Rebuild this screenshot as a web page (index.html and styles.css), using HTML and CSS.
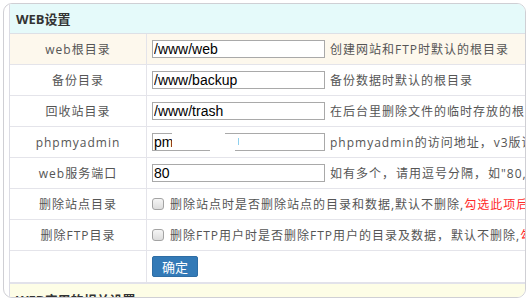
FILE: index.html
```html
<!DOCTYPE html>
<html lang="zh-CN">
<head>
<meta charset="utf-8">
<title>WEB设置</title>
<link rel="stylesheet" href="styles.css">
</head>
<body>
<div class="panel">
  <div class="inner">
    <div class="head">WEB设置</div>
    <div class="row row-hl">
      <div class="label">web根目录</div>
      <div class="value"><input class="txt" type="text" value="/www/web"><span class="desc">创建网站和FTP时默认的根目录</span></div>
    </div>
    <div class="row">
      <div class="label">备份目录</div>
      <div class="value"><input class="txt" type="text" value="/www/backup"><span class="desc">备份数据时默认的根目录</span></div>
    </div>
    <div class="row">
      <div class="label">回收站目录</div>
      <div class="value"><input class="txt" type="text" value="/www/trash"><span class="desc">在后台里删除文件的临时存放的根目录</span></div>
    </div>
    <div class="row">
      <div class="label">phpmyadmin</div>
      <div class="value"><span class="field"><input class="txt" type="text" value="pma"><span class="glitch glitch-a"></span><span class="glitch glitch-b"></span><span class="tick"></span></span><span class="desc">phpmyadmin的访问地址<span class="fw">，</span>v3版请勿随意修改</span></div>
    </div>
    <div class="row">
      <div class="label">web服务端口</div>
      <div class="value"><input class="txt" type="text" value="80"><span class="desc">如有多个<span class="fw">，</span>请用逗号分隔<span class="fw">，</span>如"80,8080"</span></div>
    </div>
    <div class="row">
      <div class="label">删除站点目录</div>
      <div class="value"><input class="chk" type="checkbox"><span class="ctext">删除站点时是否删除站点的目录和数据,默认不删除,<span class="warn">勾选此项后将同时删除</span></span></div>
    </div>
    <div class="row">
      <div class="label">删除FTP目录</div>
      <div class="value"><input class="chk" type="checkbox"><span class="ctext">删除FTP用户时是否删除FTP用户的目录及数据<span class="fw">，</span>默认不删除,<span class="warn">勾选此项后将同时删除</span></span></div>
    </div>
    <div class="row row-btn">
      <div class="label"></div>
      <div class="value"><button class="btn" type="button">确定</button></div>
    </div>
    <div class="head head-yellow">WEB应用的相关设置</div>
  </div>
</div>
</body>
</html>
```

FILE: styles.css
```css
* {
  box-sizing: border-box;
}

body {
  margin: 0;
  background: #fff;
  font-family: "Open Sans", "Noto Sans CJK SC", sans-serif;
}

.panel {
  margin: 3px 0 0 3px;
  width: 523px;
  height: 295px;
  border: 1px solid #cfcfd4;
  border-radius: 9px;
  overflow: hidden;
  padding-left: 5px;
  background: #fff;
}

.inner {
  height: 100%;
  border-left: 1px solid #dcdce4;
}

.head {
  height: 30px;
  display: flex;
  align-items: center;
  padding-left: 6px;
  background: #e5fafa;
  border-bottom: 1px solid #dde0e6;
  font-size: 13px;
  font-weight: bold;
  color: #333;
  white-space: nowrap;
}

.head-yellow {
  align-items: flex-start;
  padding-top: 6px;
  background: #fdfde6;
  border-bottom: none;
}

.row {
  display: flex;
  height: 31px;
  border-bottom: 1px solid #e4e4ea;
}

.row-hl {
  background: #fdf8ed;
}

.row-btn {
  height: 33px;
  border-bottom: 2px solid #e2e2ea;
}

.label {
  flex: 0 0 137px;
  border-right: 1px solid #e4e4ea;
  display: flex;
  align-items: center;
  justify-content: center;
  font-size: 12px;
  letter-spacing: 1px;
  color: #555;
  white-space: nowrap;
}

.value {
  flex: 1;
  min-width: 0;
  display: flex;
  align-items: center;
  padding-left: 5px;
  white-space: nowrap;
  overflow: hidden;
}

.txt {
  flex: none;
  width: 173px;
  height: 18px;
  margin: 0;
  padding: 0 1px;
  border: 1px solid #a9a9a9;
  background: #fff;
  font-family: "Liberation Sans", Arial, sans-serif;
  font-size: 14px;
  color: #000;
  outline: none;
}

.field {
  position: relative;
  display: flex;
  flex: none;
}

.glitch {
  position: absolute;
  background: #fff;
}

.glitch-a {
  left: 20px;
  top: 0;
  width: 53px;
  height: 17px;
}

.glitch-b {
  left: 58px;
  top: 8px;
  width: 25px;
  height: 10px;
}

.tick {
  position: absolute;
  left: 86px;
  top: 5px;
  width: 1px;
  height: 7px;
  background: #8fd0ee;
}

.desc {
  margin-left: 5px;
  font-size: 12px;
  letter-spacing: 1px;
  color: #555;
}

.fw {
  margin: 0 1px 0 0;
}

.chk {
  -webkit-appearance: none;
  appearance: none;
  flex: none;
  width: 12px;
  height: 12px;
  margin: 0 6px 0 0;
  border: 1px solid #a3a3a3;
  border-radius: 3px;
  background: linear-gradient(#f5f5f5, #dcdcdc);
}

.ctext {
  font-size: 12px;
  letter-spacing: 1px;
  color: #555;
}

.warn {
  color: #ff2a2a;
}

.btn {
  width: 46px;
  height: 21px;
  margin: 0;
  padding: 0;
  border: 1px solid #2e6da4;
  border-radius: 2px;
  background: #337ab7;
  color: #fff;
  font-family: "Noto Sans CJK SC", sans-serif;
  font-size: 13px;
  line-height: 19px;
}
```
